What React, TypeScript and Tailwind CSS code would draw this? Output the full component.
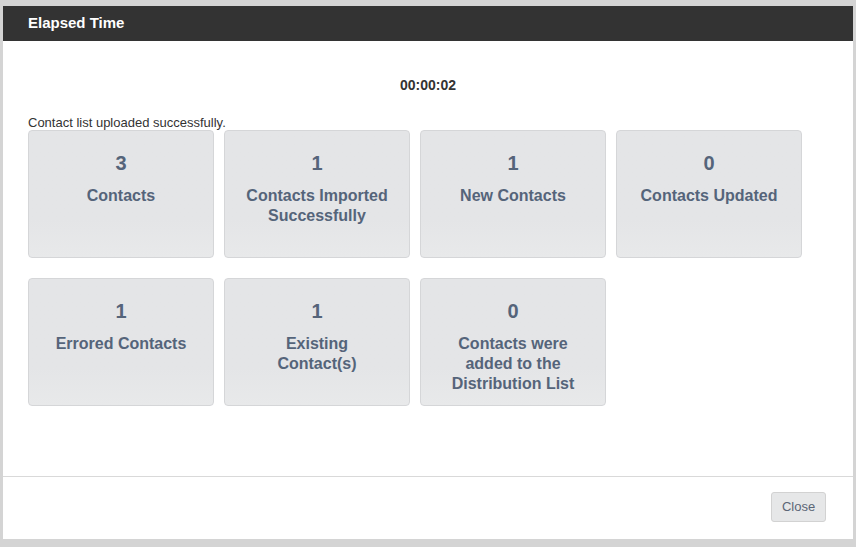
import React from "react";

type Stat = { value: number; label: React.ReactNode };

const stats: Stat[][] = [
  [
    { value: 3, label: "Contacts" },
    { value: 1, label: <>Contacts Imported<br />Successfully</> },
    { value: 1, label: "New Contacts" },
    { value: 0, label: "Contacts Updated" },
  ],
  [
    { value: 1, label: "Errored Contacts" },
    { value: 1, label: <>Existing<br />Contact(s)</> },
    { value: 0, label: <>Contacts were<br />added to the<br />Distribution List</> },
  ],
];

// single stat tile
const StatCard = ({ value, label }: Stat) => (
  <div className="w-[186px] h-[128px] rounded-[4px] border border-[#d5d6d8] bg-gradient-to-b from-[#e4e5e7] from-70% to-[#e8e9ea] flex flex-col items-center pt-[20px] text-[#55647a] font-bold">
    <div className="text-[20px] leading-[24px]">{value}</div>
    <div className="mt-[11px] text-[16px] leading-[20px] text-center">{label}</div>
  </div>
);

export default function App() {
  return (
    <div
      className="h-[547px] w-[856px] bg-[#d4d4d4] flex flex-col pt-[6px] pl-[3px] pr-[3px] pb-[8px] overflow-hidden"
      style={{ fontFamily: '"Liberation Sans", Arial, sans-serif' }}
    >
      <div className="flex-1 bg-white flex flex-col">
        <header className="h-[35px] bg-[#333333] flex items-center px-[25px]">
          <h1 className="text-white text-[15px] font-bold">Elapsed Time</h1>
        </header>

        <main className="flex-1 px-[25px] pt-[34px]">
          <div className="text-center text-[14px] leading-[20px] font-bold text-[#333]">00:00:02</div>
          <p className="mt-[20px] text-[13px] leading-[15px] text-[#333]">Contact list uploaded successfully.</p>
          <div className="flex flex-col gap-[20px]">
            {stats.map((row, i) => (
              <div key={i} className="flex gap-[10px]">
                {row.map((s, j) => (
                  <StatCard key={j} value={s.value} label={s.label} />
                ))}
              </div>
            ))}
          </div>
        </main>

        <footer className="h-[63px] border-t border-[#d9d9d9] flex justify-end items-start pt-[15px] pr-[27px]">
          <button
            type="button"
            className="w-[55px] h-[30px] rounded-[3px] border border-[#d2d2d2] bg-[#e6e7e8] text-[13px] text-[#5b6676]"
          >
            Close
          </button>
        </footer>
      </div>
    </div>
  );
}
